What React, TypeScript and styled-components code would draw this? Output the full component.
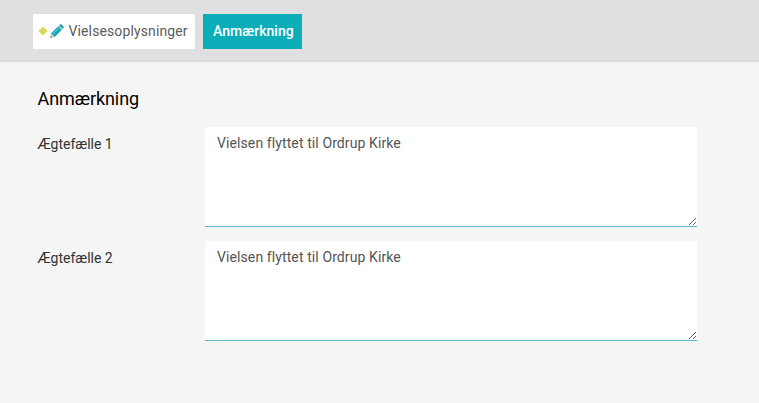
import React from "react";
import styled, { createGlobalStyle } from "styled-components";

const GlobalStyle = createGlobalStyle`
  *, *::before, *::after { box-sizing: border-box; }
  body {
    margin: 0;
    background: #f5f5f5;
    font-family: Roboto, "Liberation Sans", sans-serif;
    font-size: 14px;
    color: #333;
  }
`;

const Page = styled.div`
  height: 403px;
  overflow: hidden;
`;

const TabBar = styled.nav`
  display: flex;
  gap: 8px;
  height: 62px;
  padding: 14px 33px 0;
  background: #e0e0e0;
  border-bottom: 2px solid #d8d8d8;
`;

const Tab = styled.button<{ $active?: boolean }>`
  display: flex;
  align-items: center;
  width: ${(p) => (p.$active ? "99px" : "162px")};
  height: 35px;
  padding: 0 0 1px ${(p) => (p.$active ? "10px" : "5px")};
  border: 0;
  background: ${(p) => (p.$active ? "#0cadb9" : "#fff")};
  color: ${(p) => (p.$active ? "#fff" : "#5c5c5c")};
  font: ${(p) => (p.$active ? 500 : 400)} 14px/20px Roboto, sans-serif;
  letter-spacing: ${(p) => (p.$active ? "0.05px" : "0.12px")};
  white-space: nowrap;
`;

const Diamond = styled.svg`
  width: 10px;
  height: 10px;
  margin-right: 2px;
  flex: none;
`;

const Pencil = styled.svg`
  width: 14px;
  height: 14px;
  margin-right: 4.5px;
  flex: none;
`;

const Form = styled.main`
  padding: 26px 62px 0 37.5px;
`;

const Heading = styled.h1`
  margin: 0 0 17px;
  font-size: 18px;
  line-height: 22px;
  font-weight: 400;
  letter-spacing: -0.07px;
  color: #000;
`;

const Field = styled.label`
  display: grid;
  grid-template-columns: 167.5px 492px;
  margin-bottom: 14px;
`;

const Label = styled.span`
  padding-top: 7px;
  line-height: 20px;
`;

const NoteArea = styled.textarea`
  display: block;
  width: 100%;
  height: 100px;
  padding: 6px 12px;
  border: 0;
  border-bottom: 1px solid #62b5cf;
  border-radius: 0;
  outline: 0;
  background: #fff;
  color: #555;
  font: 400 14px/20px Roboto, sans-serif;
  letter-spacing: 0.1px;
  resize: both;
`;

const fields = [
  { label: "Ægtefælle 1", note: "Vielsen flyttet til Ordrup Kirke" },
  { label: "Ægtefælle 2", note: "Vielsen flyttet til Ordrup Kirke" },
];

export default function App() {
  return (
    <Page>
      <GlobalStyle />
      <TabBar>
        <Tab>
          <Diamond viewBox="0 0 10 10">
            <path d="M5 1.3 8.7 5 5 8.7 1.3 5Z" fill="#dbd957" stroke="#dbd957" strokeWidth="1.2" strokeLinejoin="round" />
          </Diamond>
          <Pencil viewBox="0 0 14 14">
            <path d="M1.2 9 5 12.8 .5 13.5Z" fill="#e9c8ac" />
            <path d="M.3 13.8.7 11.7 2.4 13.4Z" fill="#168fa5" />
            <path d="M1.1 9.3 8.2 2.2 11.8 5.8 4.7 12.9Z" fill="#12a5b8" />
            <path d="M3 9.8 8.9 3.9" stroke="#8cdae0" strokeWidth="1" />
            <path d="M8.2 2.2 9.4 1 13 4.6 11.8 5.8Z" fill="#9fc9ce" />
            <path d="M9.2 1.2 10 .5Q10.8 0 11.5.5L13.4 2.4Q14 3.1 13.5 3.9L12.8 4.8Z" fill="#1697ac" />
          </Pencil>
          Vielsesoplysninger
        </Tab>
        <Tab $active>Anmærkning</Tab>
      </TabBar>
      <Form>
        <Heading>Anmærkning</Heading>
        {fields.map((f) => (
          <Field key={f.label}>
            <Label>{f.label}</Label>
            <NoteArea defaultValue={f.note} spellCheck={false} />
          </Field>
        ))}
      </Form>
    </Page>
  );
}
